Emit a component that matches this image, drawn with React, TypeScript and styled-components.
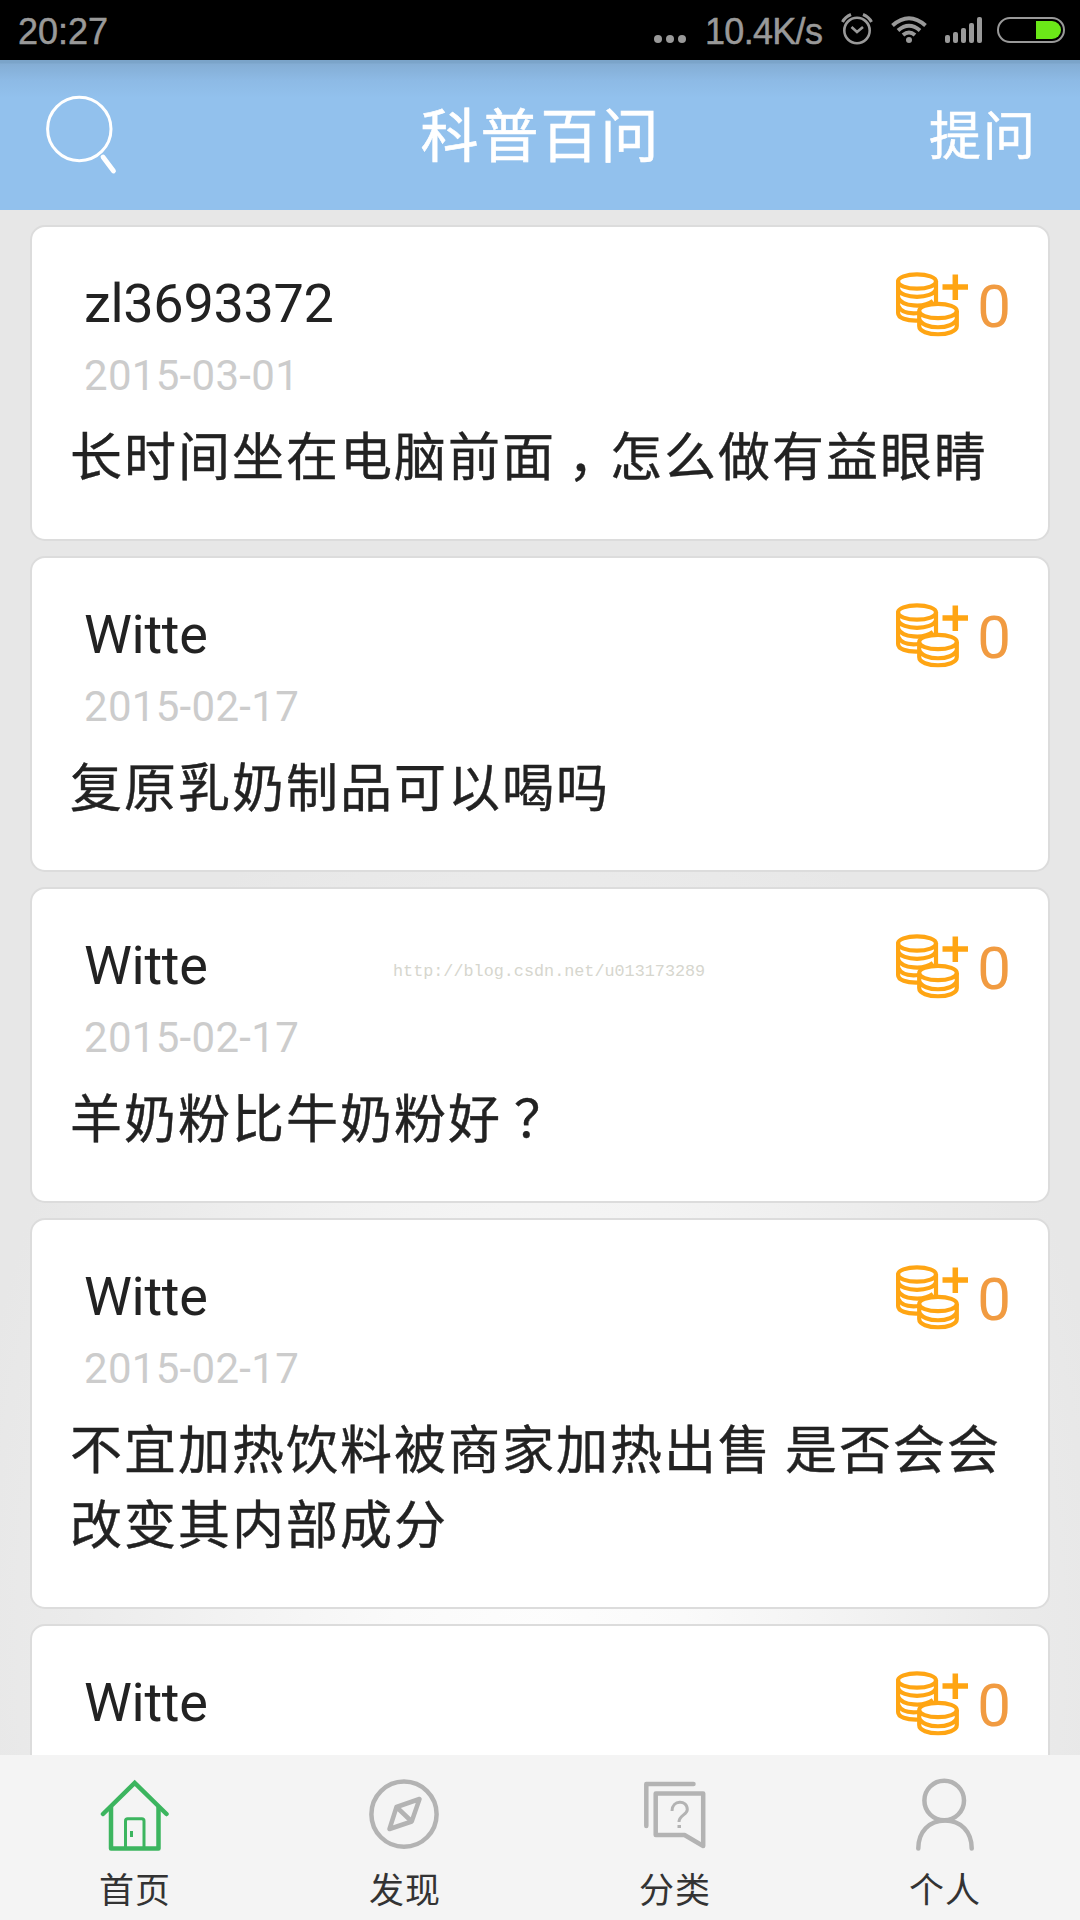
import React from "react";
import styled, { createGlobalStyle } from "styled-components";

const Global = createGlobalStyle`
  * { box-sizing: border-box; }
  body { margin: 0; background: #e8e8e8; }
`;

const Screen = styled.div`
  width: 1080px;
  height: 1920px;
  display: flex;
  flex-direction: column;
  overflow: hidden;
  position: relative;
  font-family: Roboto, "Noto Sans CJK SC", sans-serif;
  background: radial-gradient(ellipse 580px 900px at 540px 1640px, #fdfdfd 0%, #fafafa 25%, #f3f3f3 52%, #ebebeb 80%, #e7e7e7 100%);
`;

const StatusBar = styled.div`
  flex: none;
  height: 60px;
  background: #000;
  color: #999;
  display: flex;
  align-items: center;
  justify-content: space-between;
  padding: 0 15px 0 18px;
  font: 36px/60px "Liberation Sans", sans-serif;
  svg { display: block; }
`;

const Clock = styled.span`
  padding-top: 3px;
  line-height: 58px;
  -webkit-text-stroke: 0.5px #999;
`;

const StatusRight = styled.div`
  display: flex;
  align-items: center;
`;

const Dots = styled.span`
  display: flex;
  gap: 4px;
  margin: 18px 19px 0 0;
  i {
    width: 8px;
    height: 8px;
    border-radius: 50%;
    background: #999;
  }
`;

const Speed = styled(Clock)`
  width: 135px;
  letter-spacing: -0.7px;
`;

const Header = styled.header`
  flex: none;
  height: 150px;
  display: grid;
  grid-template-columns: 1fr auto 1fr;
  align-items: center;
  padding: 0 45px 0 44px;
  color: #fff;
  background: linear-gradient(#7ba4c9 0, #7ba4c9 3px, #84add4 4px, #8dbae5 20px, #92c1ed 38px, #92c1ed 100%);
`;

const Title = styled.h1`
  margin: 0;
  padding: 4px 0 0 2px;
  font-size: 58px;
  letter-spacing: 2px;
  font-weight: 400;
  line-height: 146px;
  -webkit-text-stroke: 0.6px #fff;
`;

const Ask = styled.span`
  justify-self: end;
  font-size: 52px;
  letter-spacing: 2px;
  margin-right: -2px;
  padding-bottom: 5px;
  -webkit-text-stroke: 0.6px #fff;
`;

const List = styled.main`
  flex: 1;
  min-height: 0;
  overflow: hidden;
  display: flex;
  flex-direction: column;
  gap: 15px;
  padding: 15px 30px 0;
`;

const Card = styled.article`
  flex: none;
  background: #fff;
  border: 2px solid #dcdcdc;
  border-radius: 15px;
  padding: 41px 37px 43px 38px;
  color: #222;
`;

const CardTop = styled.div`
  display: flex;
  justify-content: space-between;
  padding-left: 14px;
`;

const Name = styled.div`
  font-size: 54px;
  line-height: 72px;
  letter-spacing: -0.3px;
`;

const DateText = styled.div`
  height: 72px;
  font-size: 42px;
  line-height: 72px;
  letter-spacing: 0.3px;
  color: #ccc;
`;

const Score = styled.div`
  display: flex;
  font-size: 60px;
  line-height: 78px;
  color: #f19b41;
  svg { display: block; margin: 4px 9px 0 0; }
`;

const Question = styled.p`
  margin: 9px 0 0;
  font-size: 52px;
  letter-spacing: 2px;
  word-spacing: -2px;
  line-height: 75px;
  white-space: pre;
  -webkit-text-stroke: 0.4px #222;
`;

const Punct = styled.span`
  margin-left: 12px;
  letter-spacing: -10px;
`;

const TabBar = styled.nav`
  flex: none;
  height: 165px;
  background: #f4f4f4;
  display: grid;
  grid-template-columns: repeat(4, 1fr);
`;

const Tab = styled.div`
  display: flex;
  flex-direction: column;
  align-items: center;
  padding-top: 22px;
  font-size: 35px;
  letter-spacing: 1px;
  line-height: 52px;
  color: #333;
  svg { display: block; margin-bottom: 13px; }
`;

const Watermark = styled.div`
  position: absolute;
  left: 393px;
  top: 960px;
  font: 16.8px/24px "Liberation Mono", monospace;
  color: #d6d6ce;
`;

const AlarmIcon = () => (
  <svg width="34" height="34" viewBox="0 0 34 34" fill="none" stroke="#999" strokeWidth="2.6">
    <circle cx="17" cy="17.500" r="12.7" />
    <path d="M11.500 14l5.500 5 6-5" />
    <path d="M2.500 9Q5 4 11 1.500M31.500 9Q29 4 23 1.500" strokeWidth="3" />
  </svg>
);

const WifiIcon = () => (
  <svg width="36" height="28" viewBox="0 0 36 28" fill="none" stroke="#999" strokeWidth="4">
    <path d="M1.5 9.5Q18 -5 34.500 9.500M7 14.500Q18 5 29 14.500M12 19Q18 14 24 19" />
    <circle cx="18" cy="24" r="3" fill="#999" stroke="none" />
  </svg>
);

const SignalIcon = () => (
  <svg width="38" height="26" viewBox="0 0 38 26" fill="#999">
    {[8, 11, 15, 20, 26].map((h, i) => (
      <rect key={h} x={i * 8} y={26 - h} width="5" height={h} rx="2" />
    ))}
  </svg>
);

const BatteryIcon = () => (
  <svg width="68" height="26" viewBox="0 0 68 26">
    <rect x="1" y="1" width="66" height="24" rx="12" fill="none" stroke="#999" strokeWidth="2" />
    <path d="M39 4H55A9 9 0 0 1 55 22H39Z" fill="#6be818" />
  </svg>
);

const SearchIcon = () => (
  <svg width="76" height="82" viewBox="0 0 76 82" fill="none" stroke="#fff">
    <circle cx="35.300" cy="35" r="31.700" strokeWidth="3" />
    <path d="M59 63L69.500 77" strokeWidth="4.800" strokeLinecap="round" />
  </svg>
);

const CoinsIcon = () => (
  <svg width="72" height="66" viewBox="0 0 72 66" fill="none" stroke="#ffa513" strokeWidth="4.200">
    <ellipse cx="21" cy="9.500" rx="19" ry="7.200" />
    <path d="M2.100 9V41C2.100 46 10 49 23 48.500M40 9V30M2.100 17C5 27.500 37 27.500 40 17M2.100 25.500C6 35 28 36 37 29M2.100 33.500C5 41 14 42 23 41" />
    <ellipse cx="42" cy="39" rx="18.800" ry="7.200" fill="#fff" />
    <path d="M23.200 39V54C23.200 65 60.800 65 60.800 54V39M23.200 47C27 58 57 58 60.800 47" />
    <path d="M59.300 2.500V28M46.500 15H72" strokeWidth="5.500" />
  </svg>
);

const HomeIcon = () => (
  <svg width="70" height="76" viewBox="0 0 70 76" fill="none" stroke="#3cb55f" strokeLinejoin="round">
    <path d="M3 37L34.700 6L66.500 37" strokeWidth="4.500" strokeLinecap="round" strokeLinejoin="miter" />
    <path d="M11 30V71.500H58.500V30" strokeWidth="4.500" />
    <path d="M25.500 70V44Q25.500 41.800 27.700 41.800H41.800Q44 41.800 44 44V70" strokeWidth="3" />
    <path d="M31.500 54V60" strokeWidth="3" />
  </svg>
);

const CompassIcon = () => (
  <svg width="70" height="76" viewBox="0 0 70 76" fill="none" stroke="#b3b3b3" strokeLinejoin="round" overflow="visible">
    <circle cx="34" cy="37.200" r="32.600" strokeWidth="4.500" />
    <path d="M49.500 22L41.700 44.500L19.500 52L26.500 30ZM26.500 30L41.700 44.500" strokeWidth="4.500" />
  </svg>
);

const CategoryIcon = () => (
  <svg width="70" height="76" viewBox="0 0 70 76" fill="none" stroke="#b3b3b3">
    <path d="M6.300 49V7H53.500" strokeWidth="4.500" strokeLinecap="round" strokeLinejoin="round" />
    <path d="M15.700 16.500H63.200V69L44.500 58H15.700Z" strokeWidth="4.500" strokeLinejoin="round" />
    <path d="M32 34C32 22.500 47.300 22.500 47.300 32.500C47.300 38 39 38 39 45" strokeWidth="3" />
    <path d="M37.500 49.500H41" strokeWidth="3" />
  </svg>
);

const PersonIcon = () => (
  <svg width="70" height="76" viewBox="0 0 70 76" fill="none" stroke="#b3b3b3" strokeWidth="4.500">
    <circle cx="34.200" cy="23.500" r="19.800" />
    <path d="M8.300 71.500C8.300 55 19 43.500 35 43.500S61.700 55 61.700 71.500" strokeLinecap="round" />
  </svg>
);

interface QuestionItem {
  name: string;
  date?: string;
  text?: string;
}

const questions: QuestionItem[] = [
  { name: "zl3693372", date: "2015-03-01", text: "长时间坐在电脑前面，怎么做有益眼睛" },
  { name: "Witte", date: "2015-02-17", text: "复原乳奶制品可以喝吗" },
  { name: "Witte", date: "2015-02-17", text: "羊奶粉比牛奶粉好？" },
  { name: "Witte", date: "2015-02-17", text: "不宜加热饮料被商家加热出售 是否会会\n改变其内部成分" },
  { name: "Witte" },
];

const tabs = [
  { label: "首页", Icon: HomeIcon },
  { label: "发现", Icon: CompassIcon },
  { label: "分类", Icon: CategoryIcon },
  { label: "个人", Icon: PersonIcon },
];

const Spacer = styled.span<{ $w: number }>`
  width: ${(p) => p.$w}px;
`;

// Full-width punctuation sits in the middle of its cell.
const withPunctuation = (text: string) =>
  text.split(/([，？])/).map((part, i) => (i % 2 ? <Punct key={i}>{part}</Punct> : part));

export default function App() {
  return (
    <Screen>
      <Global />
      <StatusBar>
        <Clock>20:27</Clock>
        <StatusRight>
          <Dots><i /><i /><i /></Dots>
          <Speed>10.4K/s</Speed>
          <AlarmIcon />
          <Spacer $w={17} />
          <WifiIcon />
          <Spacer $w={18} />
          <SignalIcon />
          <Spacer $w={14} />
          <BatteryIcon />
        </StatusRight>
      </StatusBar>
      <Header>
        <SearchIcon />
        <Title>科普百问</Title>
        <Ask>提问</Ask>
      </Header>
      <List>
        {questions.map((q, i) => (
          <Card key={i}>
            <CardTop>
              <div>
                <Name>{q.name}</Name>
                <DateText>{q.date}</DateText>
              </div>
              <Score><CoinsIcon />0</Score>
            </CardTop>
            {q.text && <Question>{withPunctuation(q.text)}</Question>}
          </Card>
        ))}
      </List>
      <TabBar>
        {tabs.map(({ label, Icon }) => (
          <Tab key={label}>
            <Icon />
            {label}
          </Tab>
        ))}
      </TabBar>
      <Watermark>http://blog.csdn.net/u013173289</Watermark>
    </Screen>
  );
}
